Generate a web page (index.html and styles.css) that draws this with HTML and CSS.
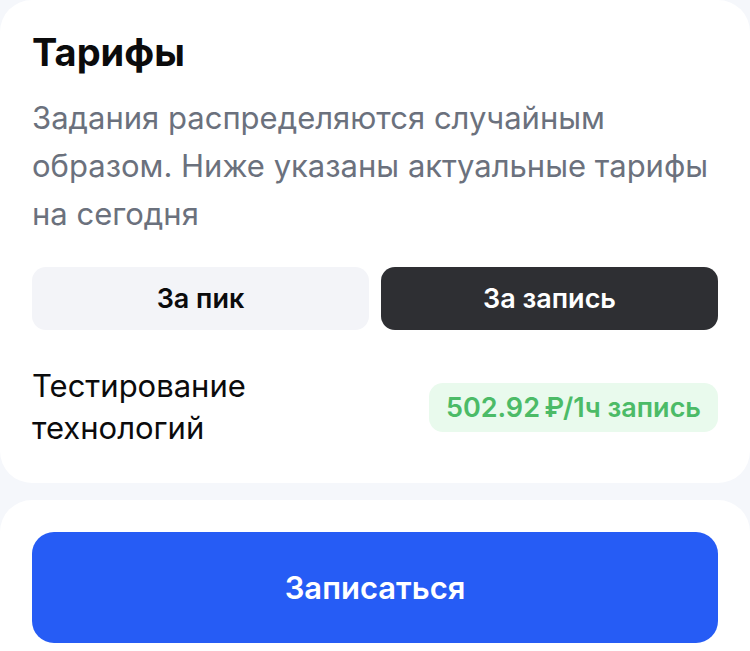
FILE: index.html
```html
<!DOCTYPE html>
<html lang="ru">
<head>
  <meta charset="UTF-8" />
  <title>Тарифы</title>
  <link rel="stylesheet" href="styles.css">
</head>
<body>

  <div class="card">
    <h1>Тарифы</h1>
    <p class="subtitle">Задания распределяются случайным образом. Ниже указаны актуальные тарифы на сегодня</p>

    <div class="tabs">
      <button class="tab">За пик</button>
      <button class="tab active">За запись</button>
    </div>

    <div class="rate-row">
      <div class="rate-name">Тестирование технологий</div>
      <div class="rate-badge">502.92&#8239;₽/1ч запись</div>
    </div>
  </div>

  <div class="card card-bottom">
    <button class="submit-btn">Записаться</button>
  </div>

</body>
</html>
```

FILE: styles.css
```css
:root {
  --bg: #f5f7fb;
  --card: #ffffff;
  --text: #0b0b0c;
  --muted: #6b717d;
  --tab-light: #f3f4f8;
  --tab-dark: #2e2f33;
  --green: #4cbb67;
  --green-bg: #e9faed;
  --blue: #265cf5;
}

body {
  margin: 0;
  background: var(--bg);
  font-family: Inter, "Liberation Sans", sans-serif;
  color: var(--text);
}

.card {
  background: var(--card);
  border-radius: 32px;
  padding: 28px 32px 34px;
}

h1 {
  margin: 0;
  font-size: 38px;
  line-height: 48px;
  font-weight: 700;
}

.subtitle {
  margin: 18px 0 0;
  font-size: 31px;
  line-height: 48px;
  color: var(--muted);
}

.tabs {
  display: grid;
  grid-template-columns: 1fr 1fr;
  gap: 12px;
  margin-top: 29px;
}

.tab {
  height: 63px;
  border: none;
  border-radius: 14px;
  background: var(--tab-light);
  color: var(--text);
  font-family: inherit;
  font-size: 27px;
  font-weight: 600;
  cursor: pointer;
}

.tab.active {
  background: var(--tab-dark);
  color: #fff;
}

.rate-row {
  display: flex;
  align-items: center;
  justify-content: space-between;
  margin-top: 35px;
}

.rate-name {
  font-size: 31px;
  line-height: 42px;
  width: 260px;
}

.rate-badge {
  background: var(--green-bg);
  color: var(--green);
  border-radius: 14px;
  padding: 0 17px;
  height: 49px;
  line-height: 49px;
  font-size: 27px;
  font-weight: 600;
}

.card-bottom {
  margin-top: 17px;
  padding-top: 32px;
  padding-bottom: 8px;
  border-radius: 32px 32px 0 0;
}

.submit-btn {
  width: 100%;
  height: 111px;
  border: none;
  border-radius: 22px;
  background: var(--blue);
  color: #fff;
  font-family: inherit;
  font-size: 31px;
  font-weight: 600;
  cursor: pointer;
}
```
